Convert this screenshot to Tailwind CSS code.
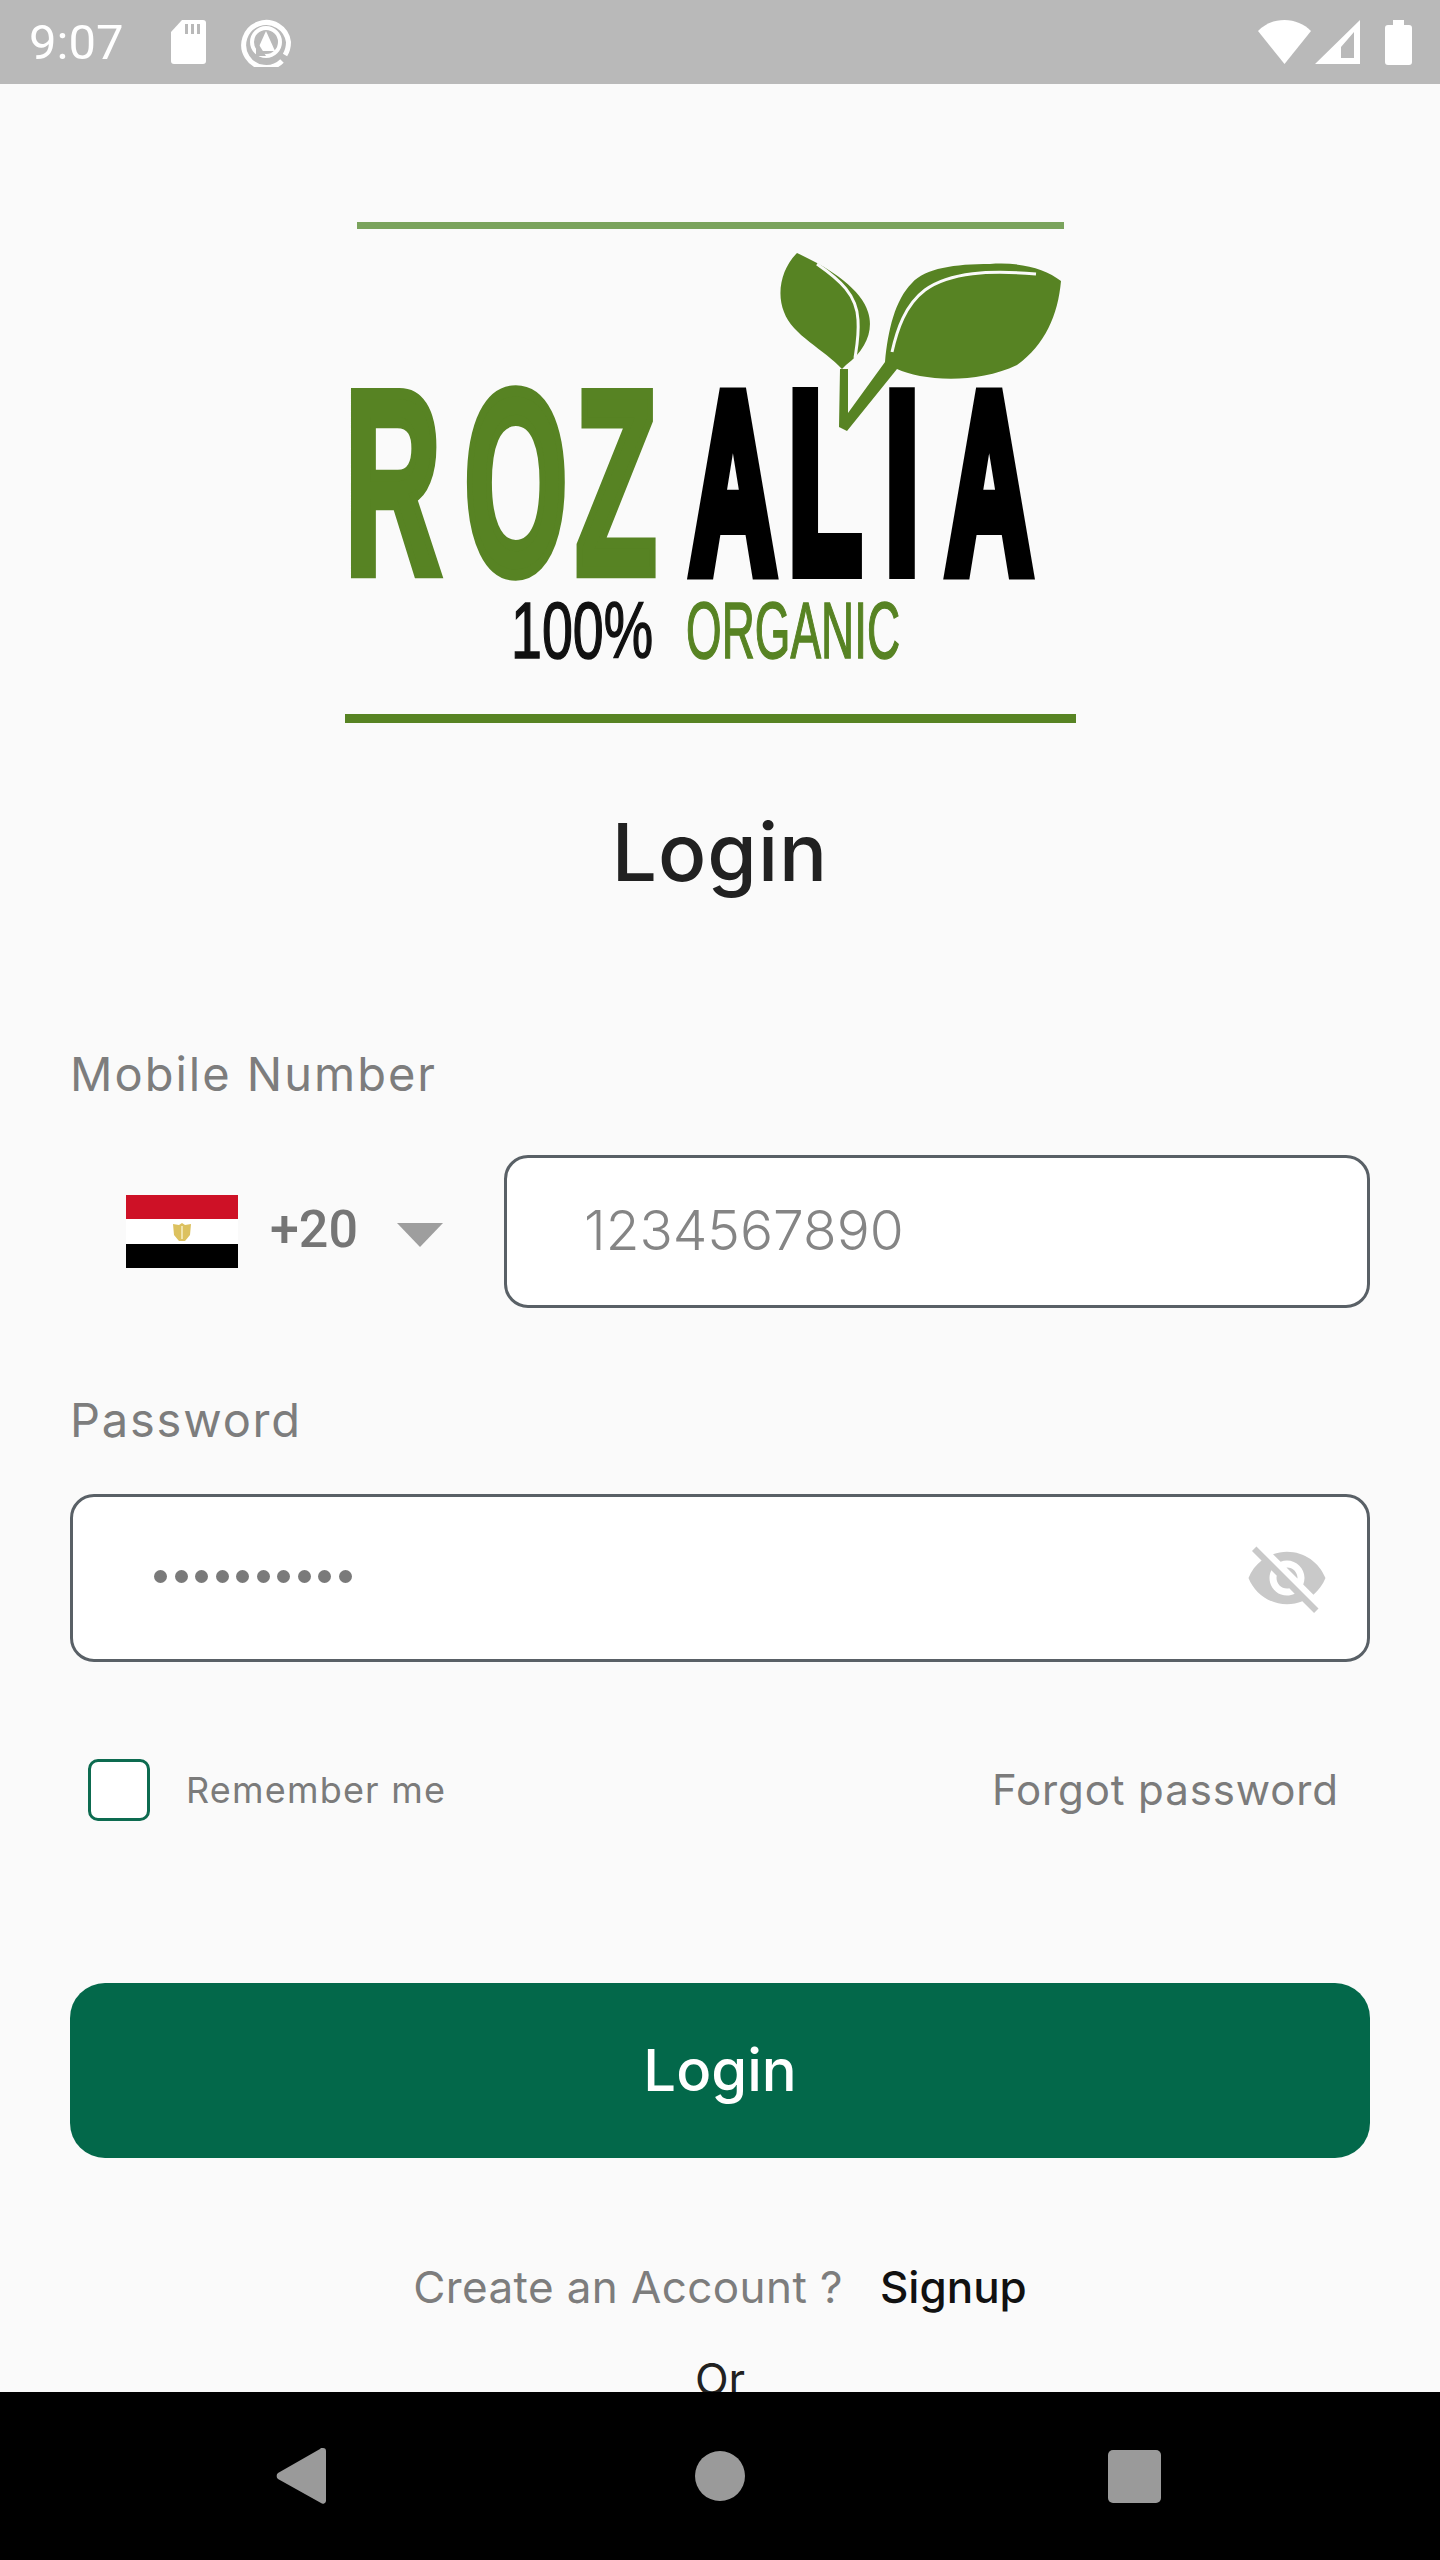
<!DOCTYPE html>
<html lang="en">
<head>
    <meta charset="UTF-8">
    <meta name="viewport" content="width=device-width, initial-scale=1.0">
    <title>Rozalia - Login</title>
    <script src="https://cdn.jsdelivr.net/npm/@tailwindcss/browser@4"></script>
</head>
<body class="bg-[#fafafa] font-['Inter',sans-serif]">
<div class="relative w-[1440px] h-[2560px] overflow-hidden flex flex-col">

    <!-- status bar -->
    <div class="h-[84px] shrink-0 bg-[#b9b9b9] flex items-center justify-between pl-[29px] pr-[28px] text-white">
        <div class="flex items-center">
            <span class="font-['Roboto',sans-serif] text-[49px] leading-none">9:07</span>
            <svg class="ml-[48px]" width="35" height="44" viewBox="0 0 35 44" fill="#fff"><path d="M11 0h21a3 3 0 0 1 3 3v38a3 3 0 0 1-3 3H3a3 3 0 0 1-3-3V12z"/><path d="M14 4h3v10h-3zM20 4h3v10h-3zM26 4h3v10h-3z" fill="#b9b9b9"/></svg>
            <svg class="ml-[35px]" width="50" height="50" viewBox="0 0 50 50" fill="none" stroke="#fff"><path d="M41 44A22.500 22.500 0 1 1 47.500 25c0 5-1 9-3.500 13" stroke-width="5"/><circle cx="25" cy="25" r="14" stroke-width="4"/><path d="M25 14l9 20H16z" fill="#fff" stroke="none"/><path d="M15 23l10 16H15z" fill="#b9b9b9" stroke="none"/></svg>
        </div>
        <div class="flex items-center">
            <svg width="53" height="44" viewBox="0 0 53 44" fill="#fff"><path d="M26.500 44L0 11C7 4 16 0 26.500 0S46 4 53 11z"/></svg>
            <svg class="ml-[4px]" width="45" height="44" viewBox="0 0 45 44" fill="#fff"><path fill-rule="evenodd" d="M45 0v44H0zM39 12L26 27v11h13z"/></svg>
            <svg class="ml-[25px]" width="27" height="45" viewBox="0 0 27 45" fill="#fff"><path d="M8 0h11v5h5a3 3 0 0 1 3 3v34a3 3 0 0 1-3 3H3a3 3 0 0 1-3-3V8a3 3 0 0 1 3-3h5z"/></svg>
        </div>
    </div>

    <!-- logo -->
    <svg class="block ml-[340px] mt-[134px] shrink-0" width="750" height="510" viewBox="340 218 750 510">
        <rect x="357" y="222" width="707" height="7" fill="#7aa35c"/>
        <rect x="345" y="714" width="731" height="9" fill="#578323"/>
        <text transform="translate(345 572.500) scale(.51 1)" x="0 234 452" font-family="Liberation Sans" font-weight="700" font-size="260" fill="#578323" stroke="#578323" stroke-width="9" vector-effect="non-scaling-stroke">ROZ</text>
        <text transform="translate(690 570) scale(.47 1)" x="0 210 416 545" font-family="Liberation Sans" font-weight="700" font-size="253" fill="#000" stroke="#000" stroke-width="14" vector-effect="non-scaling-stroke">ALIA</text>
        <text x="511" y="658" font-family="Liberation Sans" font-size="79" textLength="142" lengthAdjust="spacingAndGlyphs" fill="#111" stroke="#111" stroke-width="1.500">100%</text>
        <text x="686" y="658" font-family="Liberation Sans" font-size="79" textLength="214" lengthAdjust="spacingAndGlyphs" fill="#578323" stroke="#578323" stroke-width="1.500">ORGANIC</text>
        <path d="M797 253C782 268 776 292 784 312C792 335 825 350 842 369L846 365C866 350 874 330 868 312C862 290 830 268 797 253Z" fill="#578323"/>
        <path d="M840 369L839 427L847 431L897 369C920 380 975 385 1017 365C1045 345 1058 315 1061 281C1045 268 1020 262 990 264C955 264 925 268 912 283C895 300 888 330 885 362L848 413L848 369Z" fill="#578323"/>
        <path d="M817 264C840 280 857 295 858 320C859 335 857 345 855 358" fill="none" stroke="#fafafa" stroke-width="3"/>
        <path d="M1036 274C990 270 950 272 925 290C905 305 897 330 892 352" fill="none" stroke="#fafafa" stroke-width="3"/>
    </svg>

    <!-- form -->
    <h1 class="mt-[74px] text-center text-[80px] leading-[100px] font-medium tracking-[1px] text-[#212121]">Login</h1>

    <div class="px-[70px]">
        <label class="block mt-[142px] text-[47px] leading-[60px] tracking-[2px] text-[#7d7d7d]">Mobile Number</label>

        <div class="mt-[51px] flex items-center">
            <div class="w-[434px] flex items-center pl-[56px]">
                <svg width="112" height="73" viewBox="0 0 112 73">
                    <rect width="112" height="24" fill="#ce1126"/>
                    <rect y="24" width="112" height="25" fill="#fff"/>
                    <rect y="49" width="112" height="24" fill="#000"/>
                    <path d="M47 29l6 1 3-2 3 2 6-1-1 11-5 6h-6l-5-6z" fill="#dcc15f"/>
                    <path d="M55 31h2v13h-2z" fill="#f0e3ab"/>
                </svg>
                <span class="ml-[32px] mt-[-3px] font-['Roboto',sans-serif] text-[52px] leading-none font-medium text-[#757575]">+20</span>
                <svg class="ml-[39px] mt-[6px]" width="46" height="24" viewBox="0 0 46 24" fill="#9e9e9e"><path d="M0 0h46L23 24z"/></svg>
            </div>
            <div class="flex-1 h-[153px] bg-white border-[3.500px] border-[#596066] rounded-[24px] flex items-center pl-[77px] pb-[3px] text-[55px] text-[#858585] font-light">1234567890</div>
        </div>

        <label class="block mt-[82px] text-[47px] leading-[60px] tracking-[1.800px] text-[#7d7d7d]">Password</label>

        <div class="mt-[44px] h-[168px] bg-white border-[3.500px] border-[#596066] rounded-[24px] flex items-center justify-between pl-[81px] pr-[38px]">
            <div class="flex gap-[7.500px] mt-[-4px]">
                <i class="size-[13px] rounded-full bg-[#7a7a7a]"></i><i class="size-[13px] rounded-full bg-[#7a7a7a]"></i><i class="size-[13px] rounded-full bg-[#7a7a7a]"></i><i class="size-[13px] rounded-full bg-[#7a7a7a]"></i><i class="size-[13px] rounded-full bg-[#7a7a7a]"></i><i class="size-[13px] rounded-full bg-[#7a7a7a]"></i><i class="size-[13px] rounded-full bg-[#7a7a7a]"></i><i class="size-[13px] rounded-full bg-[#7a7a7a]"></i><i class="size-[13px] rounded-full bg-[#7a7a7a]"></i><i class="size-[13px] rounded-full bg-[#7a7a7a]"></i>
            </div>
            <svg width="84" height="84" viewBox="0 0 24 24" fill="#c9c9c9"><path d="M12 7c2.760 0 5 2.240 5 5 0 .65-.13 1.260-.36 1.830l2.920 2.920c1.510-1.260 2.700-2.890 3.430-4.750-1.730-4.390-6-7.500-11-7.500-1.400 0-2.740.25-3.980.7l2.160 2.160C10.740 7.130 11.350 7 12 7zM2 4.270l2.280 2.280.46.46C3.080 8.300 1.780 10.020 1 12c1.730 4.390 6 7.500 11 7.500 1.550 0 3.030-.3 4.380-.84l.42.42L19.730 22 21 20.730 3.270 3 2 4.270zM7.530 9.800l1.550 1.550c-.05.21-.08.43-.08.65 0 1.660 1.340 3 3 3 .22 0 .44-.03.65-.08l1.550 1.550c-.67.33-1.410.53-2.200.53-2.760 0-5-2.240-5-5 0-.79.2-1.530.53-2.200zm4.310-.78l3.150 3.150.02-.16c0-1.660-1.340-3-3-3l-.17.01z"/></svg>
        </div>

        <div class="mt-[96px] flex items-center justify-between pl-[18px] pr-[31px]">
            <div class="flex items-center">
                <div class="size-[62px] bg-white border-[3.500px] border-[#0d6b50] rounded-[10px]"></div>
                <span class="ml-[36px] text-[36px] tracking-[1.200px] text-[#7b7b7b]">Remember me</span>
            </div>
            <a class="text-[42px] tracking-[0.900px] text-[#7b7b7b]">Forgot password</a>
        </div>

        <button class="mt-[162px] w-full h-[175px] bg-[#03684a] rounded-[35px] text-white text-[58px] font-medium">Login</button>

        <div class="mt-[99px] flex justify-center items-center text-[44px] leading-[60px]">
            <span class="tracking-[0.400px] text-[#7d7d7d]">Create an Account ?</span>
            <span class="ml-[37px] font-medium text-[#111]">Signup</span>
        </div>
        <div class="mt-[32px] text-center text-[44px] leading-[60px] text-[#212121]">Or</div>
    </div>

    <!-- nav bar -->
    <div class="absolute left-0 bottom-0 w-full h-[168px] bg-black flex items-center pl-[276px]">
        <svg width="50" height="56" viewBox="0 0 50 56" fill="#9a9a9a"><path d="M47 0a3 3 0 0 1 3 3v50a3 3 0 0 1-5 2L2 31a4 4 0 0 1 0-6L44 1a3 3 0 0 1 3-1z"/></svg>
        <div class="ml-[369px] size-[50px] rounded-full bg-[#9a9a9a]"></div>
        <div class="ml-[363px] size-[53px] rounded-[5px] bg-[#9a9a9a]"></div>
    </div>
</div>
</body>
</html>
